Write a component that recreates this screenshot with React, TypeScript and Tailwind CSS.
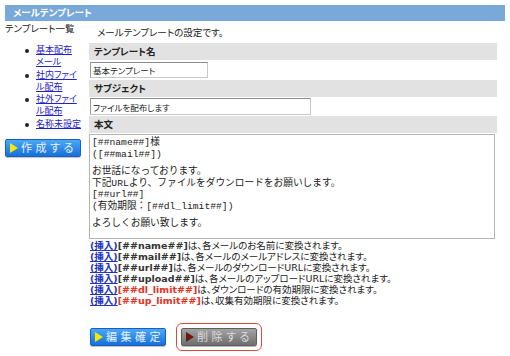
const jp = "font-['DejaVu_Sans','Noto_Sans_CJK_JP',sans-serif] [font-feature-settings:'palt']"
const mono = "font-['Liberation_Mono','Noto_Sans_CJK_JP',monospace] [font-feature-settings:normal]"

const sideLinks = [
  ['基本配布', 'メール'],
  ['社内ファイ', 'ル配布'],
  ['社外ファイ', 'ル配布'],
  ['名称未設定'],
]

const helpLines = [
  { tag: '[##name##]', text: 'は、各メールのお名前に変換されます。', red: false },
  { tag: '[##mail##]', text: 'は、各メールのメールアドレスに変換されます。', red: false },
  { tag: '[##url##]', text: 'は、各メールのダウンロードURLに変換されます。', red: false },
  { tag: '[##upload##]', text: 'は、各メールのアップロードURLに変換されます。', red: false },
  { tag: '[##dl_limit##]', text: 'は、ダウンロードの有効期限に変換されます。', red: true },
  { tag: '[##up_limit##]', text: 'は、収集有効期限に変換されます。', red: true },
]

function Arrow({ color }: { color: string }) {
  return (
    <svg width="8" height="10" viewBox="0 0 8 10" className="shrink-0">
      <polygon points="0,0 8,5 0,10" fill={color} />
    </svg>
  )
}

function BlueButton({ label }: { label: string }) {
  return (
    <button className="flex items-center h-[18px] w-[76px] pl-[4px] gap-[3px] rounded-[2px] border border-[#1a5fc0] bg-linear-to-b from-[#4aa8f6] to-[#1570da] shadow-[0_1px_1px_rgba(0,0,0,0.25)]">
      <Arrow color="#f6e60a" />
      <span className={`${jp} text-[11px] leading-none tracking-[3.5px] text-[#e9f1ff]`}>{label}</span>
    </button>
  )
}

function GrayButton({ label }: { label: string }) {
  return (
    <button className="flex items-center h-[18px] w-[76px] pl-[4px] gap-[3px] rounded-[2px] border border-[#5e5e5e] bg-linear-to-b from-[#a4a4a4] to-[#6e6e6e] shadow-[0_1px_1px_rgba(0,0,0,0.3)]">
      <Arrow color="#6b1a0e" />
      <span className={`${jp} text-[11px] leading-none tracking-[3.5px] text-[#dcdcdc]`}>{label}</span>
    </button>
  )
}

function SectionBar({ title }: { title: string }) {
  return (
    <div className={`${jp} h-[17px] bg-[#e2e2e2] pl-[5px] text-[9.5px] leading-[17px] font-bold text-[#222]`}>
      {title}
    </div>
  )
}

export default function App() {
  return (
    <div className={`${jp} w-[510px] h-[356px] bg-white px-[5px] pt-[5px] text-[#222] text-[9px]`}>
      <div className="h-[16px] bg-[#79a9d9] pl-[8px] text-[9.5px] leading-[16px] font-bold text-white">
        メールテンプレート
      </div>

      <div className="flex">
        <div className="w-[84px] shrink-0">
          <div className="pt-[2px] leading-[12px] text-[9.5px] whitespace-nowrap">テンプレート一覧</div>
          <ul className="mt-[9px] pl-[20px]">
            {sideLinks.map((lines) => (
              <li key={lines.join('')} className="flex">
                <span className="mt-[5px] w-[4px] h-[4px] rounded-full bg-[#222] shrink-0" />
                <a className="ml-[7px] leading-[12.3px] text-[9px] text-[#2222cc] underline whitespace-nowrap">
                  {lines.map((l, i) => (
                    <span key={i} className="block">{l}</span>
                  ))}
                </a>
              </li>
            ))}
          </ul>
          <div className="mt-[9px]">
            <BlueButton label="作成する" />
          </div>
        </div>

        <div className="flex-1 pr-[8px]">
          <div className="mt-[6px] mb-[4px] pl-[8px] leading-[12px] text-[9.5px]">メールテンプレートの設定です。</div>

          <SectionBar title="テンプレート名" />
          <input
            readOnly
            value="基本テンプレート"
            className={`${jp} block mt-[2px] ml-[1px] w-[118px] h-[16px] px-[2px] text-[8.5px] text-[#222] border border-[#c8c8c8] border-t-[#8a8a8a] border-l-[#9a9a9a] outline-none`}
          />

          <div className="mt-[2px]">
            <SectionBar title="サブジェクト" />
          </div>
          <input
            readOnly
            value="ファイルを配布します"
            className={`${jp} block mt-[1px] ml-[1px] w-[221px] h-[17px] px-[2px] text-[8.5px] text-[#222] border border-[#c8c8c8] border-t-[#8a8a8a] border-l-[#9a9a9a] outline-none`}
          />

          <div className="mt-[1px]">
            <SectionBar title="本文" />
          </div>
          <div className={`${mono} mt-[1px] w-[406px] h-[105px] border border-[#b4b4b4] pl-[2px] pt-[2px] text-[9.7px] leading-[11.5px] text-[#222]`}>
            <div className="mb-[6px]">
              <div>[##name##]様</div>
              <div>([##mail##])</div>
            </div>
            <div className="mb-[6px]">
              <div>お世話になっております。</div>
              <div>下記URLより、ファイルをダウンロードをお願いします。</div>
              <div>[##url##]</div>
              <div>(有効期限：[##dl_limit##])</div>
            </div>
            <div>よろしくお願い致します。</div>
          </div>

          <div className="mt-[1px] pl-[1px] text-[9.5px] leading-[11px]">
            {helpLines.map((h) => (
              <div key={h.tag} className="whitespace-nowrap">
                <a className="font-bold text-[#2233bb] underline">(挿入)</a>
                <span className={`font-bold ${h.red ? 'text-[#e8301c]' : 'text-[#333]'}`}>{h.tag}</span>
                <span>{h.text}</span>
              </div>
            ))}
          </div>

          <div className="mt-[17px] flex items-center pl-[1px]">
            <BlueButton label="編集確定" />
            <div className="ml-[10px] rounded-[6px] border-[1.5px] border-[#e2473b] px-[4px] py-[4px]">
              <GrayButton label="削除する" />
            </div>
          </div>
        </div>
      </div>
    </div>
  )
}
